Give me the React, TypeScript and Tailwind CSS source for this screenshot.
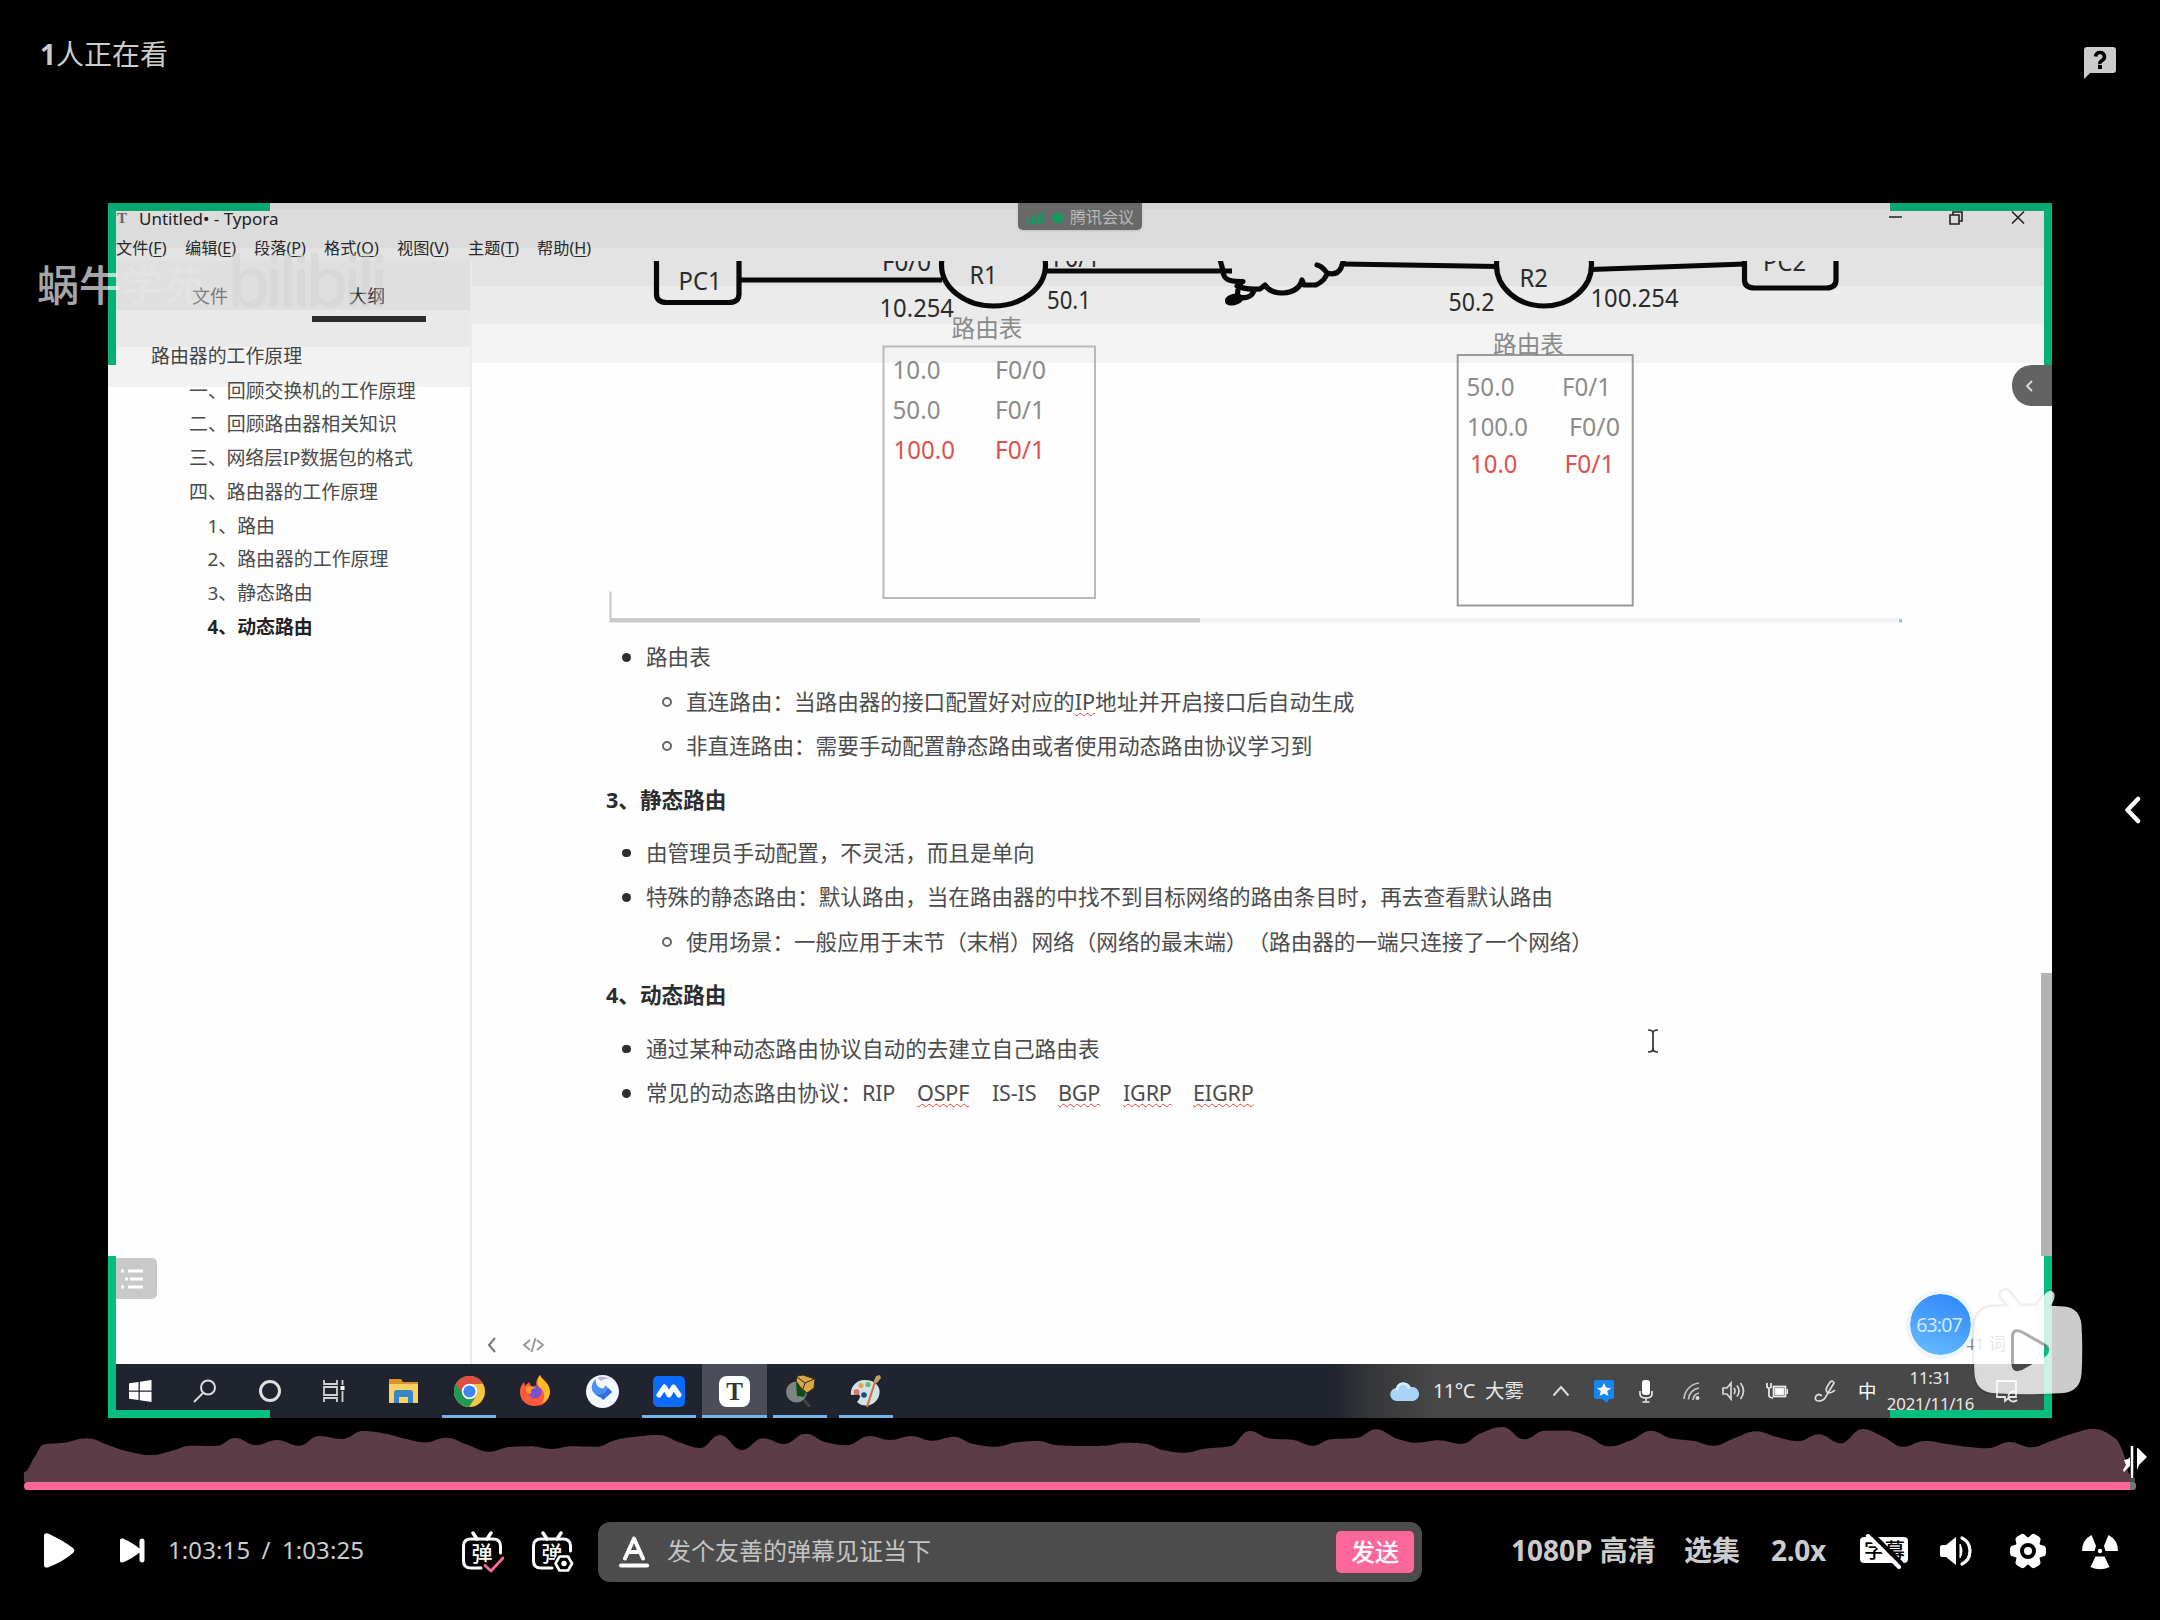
import React from "react";

/* ---------- audience heat curve ---------- */
const HEAT: [number, number][] = [
  [24, 1472], [34, 1458], [43.6, 1444.5], [64, 1442.7], [87, 1438.3], [108, 1445], [126, 1451], [150.6, 1455],
  [172, 1450.7], [190.5, 1445.7], [216, 1446], [235, 1438], [256, 1445], [277, 1440], [299, 1445.7], [319, 1436],
  [342, 1439], [363, 1431], [386, 1433.7], [406, 1439], [425, 1442.3], [446, 1437.7], [468, 1445], [489, 1451.7],
  [510, 1447], [530, 1446.3], [552, 1449], [572, 1446.3], [597, 1446.7], [613, 1440.7], [631, 1437.3], [659, 1435],
  [679.5, 1442.3], [700, 1448], [720, 1435], [742, 1450], [763, 1438.3], [784, 1444], [805.6, 1433.7], [826, 1442.3],
  [847, 1445.3], [869, 1436], [890.5, 1440], [911, 1436], [932, 1440.7], [954, 1436.7], [973, 1444], [996, 1446.7],
  [1017, 1442.3], [1037.5, 1441], [1058, 1445.3], [1081, 1446], [1104, 1445.7], [1125, 1442.7], [1145, 1443.7],
  [1164, 1450.3], [1184, 1452.7], [1205, 1448.7], [1230, 1446.3], [1249.6, 1431], [1269, 1438.3], [1292, 1439.7],
  [1313, 1445.7], [1331, 1439.3], [1356.6, 1438], [1376, 1429.3], [1398, 1439], [1416, 1442.7], [1439, 1440.3],
  [1461, 1444], [1481, 1433.3], [1503, 1427], [1524, 1439.3], [1545, 1430.7], [1566.6, 1430.7], [1587, 1436],
  [1608.5, 1446.3], [1630, 1440.7], [1651, 1430.7], [1671, 1438.3], [1694, 1441], [1713, 1445.7], [1735, 1438],
  [1756, 1431.3], [1776, 1436.7], [1799, 1441], [1819, 1434.3], [1840.6, 1443.3], [1862.5, 1429], [1883, 1436.7],
  [1903, 1446.7], [1925, 1441], [1947, 1444], [1967, 1446.7], [1987.6, 1448.3], [2009.5, 1442], [2031, 1447.3],
  [2051, 1441], [2072, 1433.7], [2093, 1429], [2115, 1438.3], [2123, 1452], [2130, 1474],
];

function heatPath() {
  let d = `M24 1482 L${HEAT[0][0]} ${HEAT[0][1]}`;
  const slope = (a: [number, number], b: [number, number], c: [number, number]) => {
    const s1 = (b[1] - a[1]) / (b[0] - a[0] || 1);
    const s2 = (c[1] - b[1]) / (c[0] - b[0] || 1);
    return s1 * s2 <= 0 ? 0 : (2 * s1 * s2) / (s1 + s2);
  };
  for (let i = 1; i < HEAT.length; i++) {
    const from = HEAT[i - 1];
    const to = HEAT[i];
    const m1 = slope(HEAT[Math.max(0, i - 2)], from, to);
    const m2 = slope(from, to, HEAT[Math.min(HEAT.length - 1, i + 1)]);
    const h = (to[0] - from[0]) * 0.42;
    d += ` C${from[0] + h} ${from[1] + m1 * h} ${to[0] - h} ${to[1] - m2 * h} ${to[0]} ${to[1]}`;
  }
  return d + " L2130 1482 Z";
}

/* ---------- Typora window ---------- */
const MENU = [
  ["文件", "F", "w-[69px]"],
  ["编辑", "E", "w-[69px]"],
  ["段落", "P", "w-[70px]"],
  ["格式", "O", "w-[73px]"],
  ["视图", "V", "w-[71px]"],
  ["主题", "T", "w-[69px]"],
  ["帮助", "H", "w-[70px]"],
];

function TitleBar() {
  return (
    <div className="flex h-[34px] items-start pl-[9px] pr-[27px] text-[#222]">
      <span className="mt-[6px] w-[22px] text-[15px] font-bold leading-[18px] text-[#666] [font-family:'Liberation_Serif',serif]">T</span>
      <span className="mt-[5px] whitespace-nowrap text-[17px] leading-[22px]">Untitled• - Typora</span>
      <svg className="ml-auto mt-[6px]" width="138" height="18" viewBox="0 0 138 18" fill="none" stroke="#222" strokeWidth="1.6">
        <path d="M2 8H15M63 6h9v9h-9zM66 6V3h9v9h-3M125 2.500l12 12M137 2.500l-12 12" />
      </svg>
    </div>
  );
}

function MenuBar() {
  return (
    <div className="flex h-[24px] items-start pl-[8px] text-[16.2px] text-[#2a2a2a]">
      {MENU.map(([t, k, w]) => (
        <span key={k} className={"shrink-0 whitespace-nowrap leading-[22px] " + w}>
          {t}(<span className="underline underline-offset-2">{k}</span>)
        </span>
      ))}
    </div>
  );
}

const OUTLINE = [
  ["一、回顾交换机的工作原理", "pl-[81px]"],
  ["二、回顾路由器相关知识", "pl-[81px]"],
  ["三、网络层IP数据包的格式", "pl-[81px] tracking-[-0.15px]"],
  ["四、路由器的工作原理", "pl-[81px]"],
  ["1、路由", "pl-[99.5px]"],
  ["2、路由器的工作原理", "pl-[99.5px]"],
  ["3、静态路由", "pl-[99.5px]"],
  ["4、动态路由", "pl-[99.5px] font-bold text-[#222]"],
];

function Sidebar() {
  return (
    <div className="flex w-[364px] shrink-0 flex-col border-r-2 border-[#ebebeb] bg-[linear-gradient(#dfdfdf_0_49px,#e9e9e9_49px_86px,#f2f2f2_86px_126px,#fefefe_126px)]">
      <div className="flex h-[61px] text-[18px]">
        <div className="flex w-[204px] items-center pl-[84px] pt-[10px] text-[#7a7a7a]">文件</div>
        <div className="flex w-[114px] items-center border-b-[6px] border-[#2d2d30] pl-[37px] pt-[16px] text-[#333]">大纲</div>
      </div>
      <div className="mt-[18px] h-[33.6px] pl-[43px] text-[18.9px] leading-[33.6px] text-[#444]">路由器的工作原理</div>
      {OUTLINE.map(([t, c]) => (
        <div key={t} className={"h-[33.75px] whitespace-nowrap text-[18.9px] leading-[34px] text-[#4a4a4a] " + c}>{t}</div>
      ))}
      <div className="mt-auto mb-[65px] ml-[8px] flex h-[41px] w-[41px] items-center rounded-r-[5px] bg-[#c9c9c9] pl-[5px]">
        <svg width="24" height="22" viewBox="0 0 24 22" stroke="#fff" strokeWidth="3" fill="none">
          <path d="M0 3h3M7 3h15M4 11h3M9 11h13M0 19h3M7 19h15" />
        </svg>
      </div>
    </div>
  );
}

type Label = [string, number, number, number, number?, string?];
const LABELS: Label[] = [
  ["PC1", 678.5, 289.5, 43],
  ["F0/0", 882, 271, 49],
  ["R1", 969.5, 284, 28],
  ["F0/1", 1053, 266.7, 47],
  ["50.1", 1047, 309, 44],
  ["10.254", 879.5, 317, 74.5],
  ["R2", 1519.500, 287.3, 28.500],
  ["50.2", 1448.5, 311, 46],
  ["100.254", 1590.500, 306.5, 88],
  ["PC2", 1763, 270.7, 43],
  ["路由表", 951.500, 337, 71, 24, "#8a8a8a"],
  ["路由表", 1493, 352.5, 71, 24, "#8a8a8a"],
  ["10.0", 892.500, 378.5, 48, 25, "#8c8c8c"],
  ["F0/0", 995, 378.5, 51, 25, "#8c8c8c"],
  ["50.0", 892.500, 419, 48, 25, "#8c8c8c"],
  ["F0/1", 995, 419, 50, 25, "#8c8c8c"],
  ["100.0", 893.5, 459.3, 61.500, 25, "#e0514c"],
  ["F0/1", 995, 459.3, 50, 25, "#e0514c"],
  ["50.0", 1466.500, 396, 48, 25, "#8c8c8c"],
  ["F0/1", 1562, 396, 49, 25, "#8c8c8c"],
  ["100.0", 1467, 436.3, 61, 25, "#8c8c8c"],
  ["F0/0", 1569, 436.3, 51, 25, "#8c8c8c"],
  ["10.0", 1470, 473.3, 47.500, 25, "#e0514c"],
  ["F0/1", 1564.5, 473.3, 50, 25, "#e0514c"],
];

function Diagram() {
  return (
    <svg className="block shrink-0" width="1580" height="370" viewBox="472 261 1580 370">
      <g fill="none" stroke="#080808" strokeWidth="5.200">
        <path d="M656.500 258V294Q656.500 302.500 667 302.500H728.500Q739 302.500 739 294V258" />
        <path d="M739 280H942" />
        <ellipse cx="993.500" cy="265" rx="52" ry="41" />
        <path d="M1046 271H1232" />
        <path d="M1220 258C1221 266 1223 268 1223 272C1224 279 1228 282 1243 281.500L1237 286Q1246 290 1260 289L1265 285Q1270 293 1283 293Q1299 292 1302 280L1304 285H1316Q1326 280 1327 273Q1322 266 1317 265M1327 273Q1337 276 1341 268L1343 262" strokeLinejoin="round" strokeLinecap="round" />
        <ellipse cx="1234" cy="299.500" rx="6" ry="2.500" strokeWidth="6.500" transform="rotate(-14 1234 299.500)" />
        <path d="M1238 289L1237 299M1238 297Q1250 300 1254 291" />
        <path d="M1343 264L1498 266.500" />
        <ellipse cx="1544" cy="265" rx="47.500" ry="41" />
        <path d="M1591 269.500L1745 264" />
        <path d="M1744.500 258V280Q1744.500 288 1755 288H1826Q1836 288 1836 280V258" />
      </g>
      <g fill="none" stroke="#b9b9b9" strokeWidth="2">
        <rect x="883.500" y="346.500" width="211.500" height="251.500" />
        <rect x="1457.700" y="355" width="175" height="250.500" stroke="#9a9a9a" />
      </g>
      <path d="M609.500 591.500h2V618h-2z" fill="#c4c4c4" />
      <path d="M609.500 618H1200v4.500H609.500z" fill="#cbcbcb" />
      <path d="M1200 618H1899v4.500H1200z" fill="#f2f2f2" />
      <path d="M1899 619h3v3.500h-3z" fill="#8fc4e8" />
      {LABELS.map(([t, x, y, w, s = 25, c = "#2b2b2b"], i) => (
        <text key={i} x={x} y={y} fontSize={s} fill={c} textLength={w} lengthAdjust="spacingAndGlyphs">{t}</text>
      ))}
    </svg>
  );
}

function Wavy({ children }: { children: React.ReactNode }) {
  return <span className="underline decoration-[#d8433f] decoration-wavy decoration-[1.2px] underline-offset-[2px]">{children}</span>;
}

function Item({ sub, children }: { sub?: boolean; children: React.ReactNode }) {
  return (
    <div className={"flex h-[44.6px] items-center whitespace-nowrap " + (sub ? "pl-[190px]" : "pl-[150px]")}>
      {sub ? (
        <span className="mr-[14px] size-[10px] rounded-full border-2 border-[#666]" />
      ) : (
        <span className="mr-[15.5px] size-[8.5px] rounded-full bg-[#2f2f2f]" />
      )}
      <span>{children}</span>
    </div>
  );
}

function Heading({ children }: { children: React.ReactNode }) {
  return <div className="flex h-[62px] items-center pl-[134px] font-bold text-[#2c2c2c]">{children}</div>;
}

function Doc() {
  return (
    <div className="flex min-w-0 flex-1 flex-col">
      <Diagram />
      <div className="mt-[4px] flex flex-col text-[21.6px] text-[#4c4c4c] [text-spacing-trim:space-all]">
        <Item>路由表</Item>
        <Item sub>直连路由：当路由器的接口配置好对应的<Wavy>IP</Wavy>地址并开启接口后自动生成</Item>
        <Item sub>非直连路由：需要手动配置静态路由或者使用动态路由协议学习到</Item>
        <Heading>3、静态路由</Heading>
        <Item>由管理员手动配置，不灵活，而且是单向</Item>
        <Item>特殊的静态路由：默认路由，当在路由器的中找不到目标网络的路由条目时，再去查看默认路由</Item>
        <Item sub>使用场景：一般应用于末节（末梢）网络（网络的最末端）（路由器的一端只连接了一个网络）</Item>
        <Heading>4、动态路由</Heading>
        <Item>通过某种动态路由协议自动的去建立自己路由表</Item>
        <Item>
          <span className="flex tracking-[-0.2px]">
            <span className="w-[216px] tracking-normal">常见的动态路由协议：</span>
            <span className="w-[55px]">RIP</span>
            <span className="w-[75px]"><Wavy>OSPF</Wavy></span>
            <span className="w-[66px]">IS-IS</span>
            <span className="w-[65px]"><Wavy>BGP</Wavy></span>
            <span className="w-[70px]"><Wavy>IGRP</Wavy></span>
            <Wavy>EIGRP</Wavy>
          </span>
        </Item>
      </div>
      <div className="mt-auto flex h-[39px] items-center pl-[14px]">
        <svg width="60" height="18" viewBox="0 0 60 18" fill="none" stroke="#777" strokeWidth="2">
          <path d="M9 2L3 9l6 7" />
          <path d="M44 4l-6 5 6 5M51 4l6 5-6 5M49.500 2l-4 14" stroke="#999" />
        </svg>
      </div>
    </div>
  );
}

/* ---------- taskbar ---------- */
function Slot({ w, on, active, children }: { w: string; on?: boolean; active?: boolean; children: React.ReactNode }) {
  return (
    <div className={"relative flex h-[54px] shrink-0 items-center justify-center " + w + (active ? " bg-[#4b4e58]" : "")}>
      {children}
      {on && <i className={"absolute bottom-0 h-[3px] bg-[#76b3ea] " + (active ? "inset-x-0" : "inset-x-[6px]")} />}
    </div>
  );
}

function Taskbar() {
  return (
    <div className="flex h-[54px] shrink-0 items-center bg-[linear-gradient(90deg,#20242e_0_1225px,#353638_1260px,#484848_1330px)] pl-[8px] text-[#e8e8e8]">
      <Slot w="w-[48px]">
        <svg width="23" height="22" viewBox="0 0 23 22" fill="#fff"><path d="M0 3.200L9.500 2v8.500H0zM10.800 1.800L22.500 0v10.500H10.800zM0 11.700h9.500V20L0 18.800zM10.800 11.700h11.700V22l-11.700-1.700z" /></svg>
      </Slot>
      <Slot w="w-[82px]">
        <svg width="24" height="24" viewBox="0 0 24 24" fill="none" stroke="#dcdcdc" strokeWidth="2"><circle cx="15" cy="8.500" r="7" /><path d="M10 14L1 23" /></svg>
      </Slot>
      <Slot w="w-[48px]"><span className="size-[22px] rounded-full border-[3px] border-[#e0e0e0]" /></Slot>
      <Slot w="w-[80px]">
        <svg width="24" height="24" viewBox="0 0 24 24" fill="none" stroke="#d2d2d2" strokeWidth="1.800"><path d="M2 1v4h13V1M2 8h13v8H2zM2 23v-4h13v4M20.500 1v5M20.500 12v11" /><path d="M18.500 7h4v4h-4z" fill="#fff" stroke="none" /></svg>
      </Slot>
      <Slot w="w-[59px]">
        <svg width="30" height="26" viewBox="0 0 30 26"><path d="M0 1h12l2 3h15v20H0z" fill="#d9932b" /><path d="M0 6h29v19H0z" fill="#fcd265" /><path d="M5 25V15q0-3 3-3h13q3 0 3 3v10h-5v-6h-9v6z" fill="#3586c9" /></svg>
      </Slot>
      <Slot w="w-[66px] ml-[3px]" on>
        <svg width="31" height="31" viewBox="0 0 32 32"><circle cx="16" cy="16" r="16" fill="#f8c642" /><path d="M2.100 8A16 16 0 0 1 29.900 8L16 8.500 9 20z" fill="#dd4f43" /><path d="M2.100 8A16 16 0 0 0 15.500 32L23 20 10 20z" fill="#1e9a55" /><circle cx="16" cy="16" r="8" fill="#fff" /><circle cx="16" cy="16" r="6.300" fill="#4285f0" /></svg>
      </Slot>
      <Slot w="w-[66px]">
        <svg width="32" height="32" viewBox="0 0 32 32"><path d="M16 31C7 31 1 25 1 17 1 12 3 9 5 7l1 4 4-4 2 4 6 1C16 8 18 3 21 0c1 4 9 7 10 16 0 9-6 15-15 15z" fill="#ff5a3a" /><path d="M21 0c1 4 9 7 10 16 0 6-4 11-9 13 5-6 4-14-2-17-3-4-1-9 1-12z" fill="#ffb929" /><circle cx="16" cy="17" r="6.500" fill="#7a4fd0" /><path d="M7 12q5-2 10 1-6 0-5 6-6-1-5-7z" fill="#ff9a2e" /></svg>
      </Slot>
      <Slot w="w-[68px]">
        <svg width="33" height="33" viewBox="0 0 33 33">
          <circle cx="16.500" cy="16.500" r="16.500" fill="#f4f7fb" />
          <path d="M10 4C5 8 4 15 9 19C12 22 16 22 17 25L26 17L19 10C19 13 17 14 15 13C11 12 9 8 10 4Z" fill="#4a90f2" />
          <path d="M9 19C12 22 16 22 17 25L26 17L22 13C21 18 15 21 9 19Z" fill="#2f6fe0" />
          <path d="M11 3Q17 0 24 4Q19 3 15 6Z" fill="#b9b3f3" />
        </svg>
      </Slot>
      <Slot w="w-[66px]" on>
        <span className="flex h-[31px] w-[32px] items-center justify-center rounded-[5px] bg-[#0a6cff]">
          <svg width="26" height="16" viewBox="0 0 26 16" fill="none" stroke="#fff" strokeWidth="5" strokeLinecap="round" strokeLinejoin="round"><path d="M3 12L8.500 4l4.500 8 4.500-8 5.500 8" /></svg>
        </span>
      </Slot>
      <Slot w="w-[65px]" on active>
        <span className="flex size-[31px] items-center justify-center rounded-[8px] bg-white text-[25px] font-bold leading-none text-[#333] [font-family:'Liberation_Serif',serif]">T</span>
      </Slot>
      <Slot w="w-[66px]" on>
        <svg width="31" height="32" viewBox="0 0 31 32"><circle cx="11.500" cy="17" r="10.500" fill="#7e8384" /><path d="M11 8a9 9 0 0 1 8 14l-7-1z" fill="#0c4d17" /><path d="M12 1l6-1 12 4-1 9-7 5-6-5-5-7z" fill="#d9a648" stroke="#3a2c10" /><path d="M12 2l8 6 9-4M20 8l-2 6" stroke="#3a2c10" fill="none" /><path d="M19 25l6 7" stroke="#444" strokeWidth="3" /></svg>
      </Slot>
      <Slot w="w-[66px]" on>
        <svg width="32" height="33" viewBox="0 0 32 33"><path d="M15 5C5 5 0 13 1 20q3 0 6-1 3 0 3 3-1 3-3 5 5 5 13 3c8-3 11-11 9-17C27 8 22 5 15 5z" fill="#cfe3ea" /><circle cx="6.500" cy="17" r="3" fill="#e2766b" /><circle cx="11" cy="10.500" r="2.600" fill="#eaa24a" /><circle cx="18" cy="9.500" r="2.600" fill="#6fb36e" /><circle cx="14" cy="20" r="2.800" fill="#1d4d73" /><path d="M17 32L25 7" stroke="#d96b31" strokeWidth="2" /><path d="M23.500 7L26 1l4-1 1 3-4 5z" fill="#c49a6c" /></svg>
      </Slot>
      <div className="ml-auto flex h-[54px] w-[662px] items-center text-[20px]">
        <svg className="mr-[13px]" width="30" height="20" viewBox="0 0 30 20"><path d="M7 20a6.500 6.500 0 0 1-.500-13A8 8 0 0 1 21 6a7 7 0 0 1 2 14z" fill="#a9d4f7" /><path d="M7 9a6 6 0 0 1 12-1" stroke="#d9eefe" strokeWidth="2.500" fill="none" /></svg>
        <span className="w-[52px] tracking-[-0.6px]">11°C</span>
        <span className="w-[67px] text-[19.500px]">大雾</span>
        <svg className="mr-[24px]" width="18" height="12" viewBox="0 0 18 12" fill="none" stroke="#ddd" strokeWidth="2"><path d="M1.500 10.500L9 2l7.500 8.500" /></svg>
        <svg className="mr-[25px]" width="20" height="23" viewBox="0 0 20 23"><path d="M2 0h16q2 0 2 2v15q0 2-2 2h-3l-2 4-5-4H2q-2 0-2-2V2q0-2 2-2z" fill="#1686f0" /><path d="M10 3l2 4.600 5 .400-3.800 3.200 1.200 4.900L10 13.500l-4.400 2.600 1.200-4.900L3 8l5-.400z" fill="#fff" /></svg>
        <svg className="mr-[30px]" width="14" height="23" viewBox="0 0 14 23" fill="none" stroke="#eee" strokeWidth="1.600"><rect x="3" y="0" width="8" height="15" rx="3" fill="#fff" stroke="none" /><path d="M1 11v3q0 4 6 4t6-4v-3M7 18v3M3.500 22h7" /></svg>
        <svg className="mr-[22px]" width="17" height="20" viewBox="0 0 17 20" fill="none" stroke="#c4c4c4" strokeWidth="1.700"><path d="M1 18A17 17 0 0 1 16 2M5.500 18.500A12 12 0 0 1 16 7M10 19a7 7 0 0 1 6-7" /><circle cx="14.500" cy="17" r="2" fill="#ddd" stroke="none" /></svg>
        <svg className="mr-[21px]" width="23" height="20" viewBox="0 0 23 20" fill="none" stroke="#d8d8d8" strokeWidth="1.700"><path d="M1 7h4l4-5v16l-4-5H1zM12 7q2 3 0 6M15 4.500q4 5.500 0 11M18.500 2q6 8 0 16" /></svg>
        <svg className="mr-[26px]" width="22" height="18" viewBox="0 0 22 18" fill="none" stroke="#eee" strokeWidth="1.700"><rect x="7.500" y="4.500" width="12" height="10" /><path d="M9.500 6.500h8v6h-8z" fill="#fff" /><path d="M1 1v4q2 2.500 4 0V1M3 6v8q1 2 4 2M21.300 7v5" /></svg>
        <svg className="mr-[22px]" width="22" height="22" viewBox="0 0 22 22" fill="none" stroke="#ddd" strokeWidth="1.700"><path d="M13 7L16 2q3-2 4 1L11 18Q9 21 4 21 0 20 2 16q3-3 6 0M13 7q-2 4 1 6 4 0 7-3" /></svg>
        <span className="w-[26px] text-[18.500px] leading-none text-white">中</span>
        <span className="flex w-[93px] flex-col items-center text-[16.800px] leading-[26px] tracking-[-0.2px]">
          <span>11:31</span>
          <span>2021/11/16</span>
        </span>
        <svg className="ml-[19px] shrink-0" width="22" height="24" viewBox="0 0 22 24" fill="none" stroke="#e6e6e6" strokeWidth="1.800"><path d="M1 2h19v16h-6l-5 4v-4H1z" /><path d="M21 14a5 5 0 1 0 0 7" /></svg>
      </div>
    </div>
  );
}

function TencentPill() {
  return (
    <div className="absolute left-[910px] top-0 flex h-[27px] w-[124px] items-center rounded-b-[5px] bg-[#696969] pl-[9px] text-[16px] text-[#b9b9b9] shadow">
      <svg width="42" height="18" viewBox="0 0 42 18" fill="#159a5f"><path d="M0 11h3.500v5H0zM5 8.500h3.500V16H5zM10 6h3.500v10H10zM15 3h2v13h-2z" /><path d="M31 4l6 4v4l-6 4-6-4V8z" /></svg>
      <span className="ml-[1px] leading-none">腾讯会议</span>
    </div>
  );
}

const TV_BODY =
  "M2008 1306L2001 1297Q1999 1291 2005 1290Q2009 1290 2012 1295L2020 1305.500L2036 1305.500L2045 1294Q2050 1288 2054 1293Q2056 1297 2051 1305.700L2064 1306.500Q2080 1308 2081.500 1325Q2083 1350 2081.500 1374Q2080 1391 2064 1393Q2028 1395.500 1992 1393Q1976 1391 1974.500 1374Q1973 1350 1974.500 1325Q1976 1308 1992 1306.500Z";

function BiliPlay() {
  return (
    <svg className="absolute left-[1862px] top-[1083px]" width="118" height="114" viewBox="1970 1286 118 114">
      <path d={TV_BODY} fill="none" stroke="#000" strokeOpacity=".07" strokeWidth="4" />
      <path fillRule="evenodd" fill="#fff" fillOpacity=".8" d={TV_BODY + "M2011.500 1336V1364Q2012 1374 2022 1370L2045 1357Q2053 1350.500 2045 1344L2022 1331Q2012 1327 2011.500 1336Z"} />
      <path d="M2012.500 1364V1336Q2013 1328 2022 1332L2045 1345Q2048 1347 2048 1350" fill="none" stroke="#777" strokeOpacity=".6" strokeWidth="3" />
    </svg>
  );
}

function VideoFrame() {
  return (
    <div className="relative ml-[108px] flex h-[1215px] w-[1944px] shrink-0 flex-col bg-[linear-gradient(#d5d5d5_0_6px,#dcdcdc_6px_45px,#e3e3e3_45px_83px,#ebebeb_83px_121px,#f3f3f3_121px_160px,#fefefe_160px)]">
      <TitleBar />
      <MenuBar />
      <div className="flex min-h-0 flex-1">
        <Sidebar />
        <Doc />
      </div>
      <Taskbar />

      <i className="absolute right-0 top-[770px] h-[283px] w-[11px] bg-[#b2b2b2]" />
      <i className="absolute left-0 top-0 h-[162px] w-[162px] border-l-[8px] border-t-[8px] border-[#05a86f] [border-left-color:#03b077]" />
      <i className="absolute right-0 top-0 h-[163px] w-[162px] border-r-[8px] border-t-[8px] border-[#05a86f] [border-right-color:#03b077]" />
      <i className="absolute bottom-0 left-0 h-[162px] w-[162px] border-b-[8px] border-l-[8px] border-[#04bd80]" />
      <i className="absolute bottom-0 right-0 h-[162px] w-[162px] border-b-[8px] border-r-[8px] border-[#04bd80]" />
      <TencentPill />
      <div className="absolute right-0 top-[162px] flex h-[41px] w-[40px] items-center rounded-l-[20px] bg-[#636363] pl-[13px]">
        <svg width="9" height="12" viewBox="0 0 9 12" fill="none" stroke="#ddd" strokeWidth="1.800"><path d="M7 1L2 6l5 5" /></svg>
      </div>
      <svg className="absolute left-[1538px] top-[825px]" width="14" height="26" viewBox="0 0 14 26" fill="none" stroke="#333" strokeWidth="1.700"><path d="M2 2q5 0 5 3v16q0 3-5 3M12 2Q7 2 7 5M12 24q-5 0-5-3" /></svg>
      <div className="absolute left-[1857px] top-[1130px] text-[17px] leading-[22px] text-[#888]">41 词</div>
      <div className="absolute left-[1802px] top-[1091px] flex size-[61px] items-center justify-center rounded-full bg-[linear-gradient(200deg,#2f86f8,#4aa0fd_50%,#6cc0ff)] pr-[3px] text-[19.500px] tracking-[-0.9px] text-[#cfeaff] outline-4 outline-[#eef6fb]">63:07</div>
      <BiliPlay />
    </div>
  );
}

/* ---------- player chrome ---------- */
function Danmaku({ gear }: { gear?: boolean }) {
  return (
    <svg width="42" height="42" viewBox="0 0 42 42" fill="none" strokeLinecap="round" strokeLinejoin="round">
      <path d="M11 2l4 6M29 2l-4 6" stroke="#fff" strokeWidth="3.500" />
      <path d={gear ? "M38.500 20V15Q38.500 8 31 8H9Q1.500 8 1.500 15V30Q1.500 37 9 37H20" : "M38.500 22V15Q38.500 8 31 8H9Q1.500 8 1.500 15V30Q1.500 37 9 37H19"} stroke="#fff" strokeWidth="3" />
      <text x="9.500" y="30" fontSize="21" fontWeight="500" fill="#fff">弹</text>
      {gear ? (
        <>
          <path d="M27.500 24.500h9.500l4 7.500-4 7.500h-9.500l-4-7.500z" fill="#000" stroke="#000" strokeWidth="5" />
          <path d="M27.500 25.500h8.500l4 7-4 7h-8.500l-4-7z" stroke="#fff" strokeWidth="2.600" />
          <circle cx="32" cy="32.500" r="2.700" fill="#fff" />
        </>
      ) : (
        <>
          <path d="M22.500 34l6.500 6L41 27" stroke="#000" strokeWidth="6" />
          <path d="M23 34.500l6 5.500L41 27" stroke="#ff6699" strokeWidth="2.800" />
        </>
      )}
    </svg>
  );
}

function Controls() {
  return (
    <div className="flex h-[121px] items-center text-[#ccc]">
      <svg className="ml-[44px]" width="31" height="35" viewBox="0 0 31 35" fill="#fff"><path d="M0 3Q0-.500 4 .500Q20 8 29 15Q31.500 17.500 29 20Q20 28 4 34.500Q0 35 0 32z" /></svg>
      <svg className="ml-[45px]" width="25" height="25" viewBox="0 0 25 25" fill="#fff"><path d="M0 2Q0 0 3 .500Q13 5 19.500 10.500V2.500Q20 .500 22.200.500T24.500 2.500V22.500Q24 24.500 22.200 24.500T19.500 22.500V14.500Q13 20 3 24.500Q0 25 0 23z" /></svg>
      <span className="-mt-px ml-[23px] w-[294px] whitespace-pre text-[24px] tracking-[0.1px]">1:03:15 <span className="px-[5px]">/</span> 1:03:25</span>
      <span className="mt-[2px] flex gap-[28px]">
        <Danmaku />
        <Danmaku gear />
      </span>
      <div className="mt-[3px] ml-[24px] flex h-[60px] w-[824px] items-center rounded-[12px] bg-[#4c4c4c] pl-[20px] pr-[8px]">
        <svg width="32" height="32" viewBox="0 0 32 32" fill="none" stroke="#fff" strokeLinecap="round" strokeLinejoin="round"><path d="M7 22.500L16 2.500l9 20M11 16h10" strokeWidth="4" /><path d="M3 29.500h26" strokeWidth="4.200" /></svg>
        <span className="-mt-[3px] ml-[17px] text-[24px] text-[#c4c4c4]">发个友善的弹幕见证当下</span>
        <button className="ml-auto h-[42px] w-[78px] rounded-[5px] bg-[#ff6699] text-[24px] font-medium leading-[40px] text-white">发送</button>
      </div>
      <div className="-mt-px ml-[89px] flex items-center text-[28px] font-bold">
        <span className="w-[173px] whitespace-nowrap">1080P 高清</span>
        <span className="w-[87px]">选集</span>
        <span className="w-[89px] tracking-[-0.3px]">2.0x</span>
      </div>
      <svg width="48" height="36" viewBox="0 0 48 36"><rect y="4" width="48" height="26" rx="4" fill="#fff" /><text x="4" y="25" fontSize="20.500" fontWeight="500" fill="#000">字幕</text><path d="M11 0L42 31" stroke="#000" strokeWidth="4.500" /><path d="M8 3L39 34" stroke="#fff" strokeWidth="4" strokeLinecap="round" /></svg>
      <svg className="ml-[32px]" width="33" height="32" viewBox="0 0 33 32" fill="none"><path d="M0 12Q0 10 3 10H6L16 2V30L6 22H3Q0 22 0 20z" fill="#fff" /><path d="M20 9q4 7 0 14z" fill="#fff" stroke="#fff" /><path d="M22 3Q30 7 30 16T22 29" stroke="#fff" strokeWidth="3.200" strokeLinecap="round" /></svg>
      <svg className="ml-[37px]" width="36" height="36" viewBox="-18 -18 36 36">
        <g fill="#fff">
          <circle r="13.500" />
          {[0, 60, 120, 180, 240, 300].map((a) => (
            <path key={a} transform={`rotate(${a})`} d="M10-7L16.500-5Q18-4 18-2V2Q18 4 16.500 5L10 7z" />
          ))}
        </g>
        <circle r="6" fill="#fff" stroke="#000" strokeWidth="4" />
      </svg>
      <svg className="ml-[36px]" width="36" height="38" viewBox="-18 -19 36 38" fill="#fff">
        <path d="M-4-5L-8.500-16Q-18-11 -18 0H-5.500zM5.500 0H18Q18-11 8.500-16L4-5zM-4.500 5.500L-9.500 16Q0 20.500 9.500 16L4.500 5.500z" />
        <circle r="5" fill="#000" />
        <circle r="2.200" />
      </svg>
    </div>
  );
}

export default function App() {
  return (
    <div className="relative flex h-[1620px] w-[2160px] flex-col overflow-hidden bg-black [font-family:'Noto_Sans','Noto_Sans_CJK_SC',sans-serif]">
      <header className="flex h-[203px] shrink-0 items-start justify-between pl-[40px] pr-[44px]">
        <div className="mt-[35px] text-[28px] leading-[38px] text-[#ccc]"><b>1</b>人正在看</div>
        <svg className="mt-[47px]" width="32" height="33" viewBox="0 0 32 33">
          <path d="M3 0H29Q32 0 32 3V23Q32 26 29 26H6L0 32V3Q0 0 3 0z" fill="#ccc" />
          <path d="M11.500 9.500Q12 5.500 16 5.500T20.500 9.500Q20.500 12 18 13.500T16 17" fill="none" stroke="#000" strokeWidth="3.600" />
          <path d="M14 18h4v4h-4z" />
        </svg>
      </header>
      <div className="flex h-[1215px] shrink-0">
        <VideoFrame />
        <div className="flex w-[108px] items-center pb-[2px] pl-[72px]">
          <svg width="18" height="28" viewBox="0 0 18 28" fill="none" stroke="#fff" strokeWidth="4.500" strokeLinecap="round" strokeLinejoin="round"><path d="M14 3L3.500 14 14 25" /></svg>
        </div>
      </div>
      <svg className="block shrink-0" width="2160" height="72" viewBox="0 1418 2160 72">
        <path d={heatPath()} fill="#5c3c46" />
        <rect x="2126" y="1482" width="10" height="8" rx="3" fill="#777" />
        <path d="M27 1482H2130V1490H27Q24 1490 24 1486T27 1482z" fill="#ff6699" />
        <path d="M2130 1478h5v4h-5z" fill="#4a4a4a" />
        <path d="M2124 1460l4-1 2-2v9l-6 6-1-2 3-5zM2138 1448l9 9-8 8-2 5v-22z" fill="#fff" />
        <path d="M2132 1446V1478" stroke="#fff" strokeWidth="2.500" />
      </svg>
      <Controls />
      <div className="absolute left-[37px] top-[257px] flex items-center font-medium text-white">
        <span className="text-[42px] leading-[56px] opacity-65">蜗牛</span>
        <span className="text-[42px] leading-[56px] opacity-15">学苑</span>
        <span className="-mt-[10px] ml-[22px] text-[70px] leading-[56px] tracking-[-5.5px] text-[#cfcfcf] opacity-40">bilibili</span>
      </div>
    </div>
  );
}
